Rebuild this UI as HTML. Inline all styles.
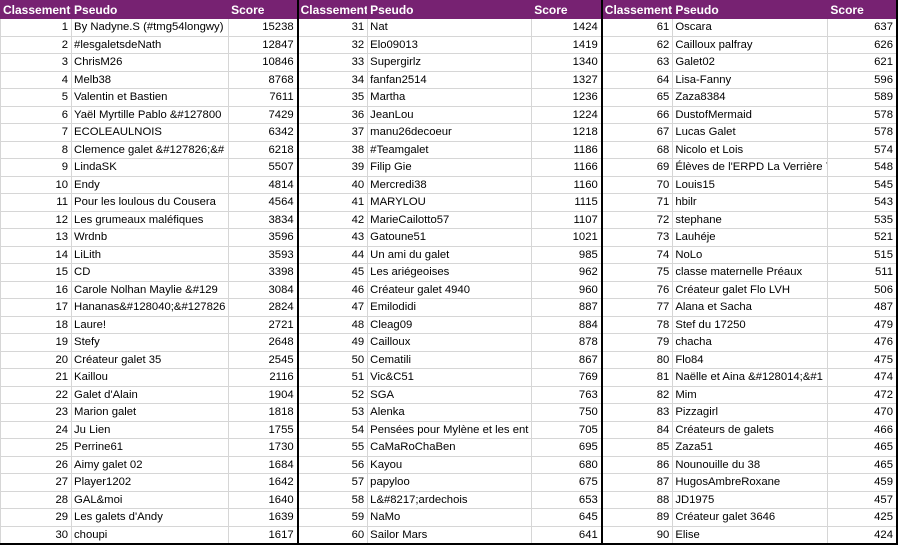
<!DOCTYPE html>
<html><head><meta charset="utf-8"><style>
body{margin:0;background:#fff;width:900px;height:547px;overflow:hidden}
table{border-collapse:collapse;table-layout:fixed;width:898px;font-family:"Liberation Sans",Arial,sans-serif;font-size:11.3px;color:#000}
td,th{height:16.5px;padding:0 3px 0 2px;white-space:nowrap;overflow:hidden;border:1px solid #d6d6d6;line-height:16px}
th{background:#772272;color:#fff;font-weight:bold;text-align:left;height:17px;font-size:12px;border-color:#772272;padding-left:2px}
tr>*:nth-child(1),tr>*:nth-child(4),tr>*:nth-child(7){text-align:right}
th:nth-child(1),th:nth-child(4),th:nth-child(7){text-align:left}
tr>*:nth-child(3),tr>*:nth-child(6),tr>*:nth-child(9){text-align:right}
th:nth-child(3),th:nth-child(6),th:nth-child(9){text-align:left}
tr>*:nth-child(2),tr>*:nth-child(5),tr>*:nth-child(8){border-left:1px solid #000;text-align:left}
tr>*:nth-child(4),tr>*:nth-child(7){border-left:2px solid #000}
tr>*:nth-child(9){border-right:2px solid #000}
tr:last-child td{border-bottom:2px solid #000}
</style></head><body>
<table>
<colgroup><col style="width:71px"><col style="width:157px"><col style="width:69px"><col style="width:70px"><col style="width:164px"><col style="width:70px"><col style="width:71px"><col style="width:155px"><col style="width:69px"></colgroup>
<tr><th>Classement</th><th>Pseudo</th><th>Score</th><th>Classement</th><th>Pseudo</th><th>Score</th><th>Classement</th><th>Pseudo</th><th>Score</th></tr>
<tr><td>1</td><td>By Nadyne.S (#tmg54longwy)</td><td>15238</td><td>31</td><td>Nat</td><td>1424</td><td>61</td><td>Oscara</td><td>637</td></tr>
<tr><td>2</td><td>#lesgaletsdeNath</td><td>12847</td><td>32</td><td>Elo09013</td><td>1419</td><td>62</td><td>Cailloux palfray</td><td>626</td></tr>
<tr><td>3</td><td>ChrisM26</td><td>10846</td><td>33</td><td>Supergirlz</td><td>1340</td><td>63</td><td>Galet02</td><td>621</td></tr>
<tr><td>4</td><td>Melb38</td><td>8768</td><td>34</td><td>fanfan2514</td><td>1327</td><td>64</td><td>Lisa-Fanny</td><td>596</td></tr>
<tr><td>5</td><td>Valentin et Bastien</td><td>7611</td><td>35</td><td>Martha</td><td>1236</td><td>65</td><td>Zaza8384</td><td>589</td></tr>
<tr><td>6</td><td>Yaël Myrtille Pablo &amp;#127800</td><td>7429</td><td>36</td><td>JeanLou</td><td>1224</td><td>66</td><td>DustofMermaid</td><td>578</td></tr>
<tr><td>7</td><td>ECOLEAULNOIS</td><td>6342</td><td>37</td><td>manu26decoeur</td><td>1218</td><td>67</td><td>Lucas Galet</td><td>578</td></tr>
<tr><td>8</td><td>Clemence galet &amp;#127826;&amp;#</td><td>6218</td><td>38</td><td>#Teamgalet</td><td>1186</td><td>68</td><td>Nicolo et Lois</td><td>574</td></tr>
<tr><td>9</td><td>LindaSK</td><td>5507</td><td>39</td><td>Filip Gie</td><td>1166</td><td>69</td><td>Élèves de l'ERPD La Verrière 7</td><td>548</td></tr>
<tr><td>10</td><td>Endy</td><td>4814</td><td>40</td><td>Mercredi38</td><td>1160</td><td>70</td><td>Louis15</td><td>545</td></tr>
<tr><td>11</td><td>Pour les loulous du Cousera</td><td>4564</td><td>41</td><td>MARYLOU</td><td>1115</td><td>71</td><td>hbilr</td><td>543</td></tr>
<tr><td>12</td><td>Les grumeaux maléfiques</td><td>3834</td><td>42</td><td>MarieCailotto57</td><td>1107</td><td>72</td><td>stephane</td><td>535</td></tr>
<tr><td>13</td><td>Wrdnb</td><td>3596</td><td>43</td><td>Gatoune51</td><td>1021</td><td>73</td><td>Lauhéje</td><td>521</td></tr>
<tr><td>14</td><td>LiLith</td><td>3593</td><td>44</td><td>Un ami du galet</td><td>985</td><td>74</td><td>NoLo</td><td>515</td></tr>
<tr><td>15</td><td>CD</td><td>3398</td><td>45</td><td>Les ariégeoises</td><td>962</td><td>75</td><td>classe maternelle Préaux</td><td>511</td></tr>
<tr><td>16</td><td>Carole Nolhan Maylie &amp;#129</td><td>3084</td><td>46</td><td>Créateur galet 4940</td><td>960</td><td>76</td><td>Créateur galet Flo LVH</td><td>506</td></tr>
<tr><td>17</td><td>Hananas&amp;#128040;&amp;#127826</td><td>2824</td><td>47</td><td>Emilodidi</td><td>887</td><td>77</td><td>Alana et Sacha</td><td>487</td></tr>
<tr><td>18</td><td>Laure!</td><td>2721</td><td>48</td><td>Cleag09</td><td>884</td><td>78</td><td>Stef du 17250</td><td>479</td></tr>
<tr><td>19</td><td>Stefy</td><td>2648</td><td>49</td><td>Cailloux</td><td>878</td><td>79</td><td>chacha</td><td>476</td></tr>
<tr><td>20</td><td>Créateur galet 35</td><td>2545</td><td>50</td><td>Cematili</td><td>867</td><td>80</td><td>Flo84</td><td>475</td></tr>
<tr><td>21</td><td>Kaillou</td><td>2116</td><td>51</td><td>Vic&amp;C51</td><td>769</td><td>81</td><td>Naëlle et Aina &amp;#128014;&amp;#1</td><td>474</td></tr>
<tr><td>22</td><td>Galet d'Alain</td><td>1904</td><td>52</td><td>SGA</td><td>763</td><td>82</td><td>Mim</td><td>472</td></tr>
<tr><td>23</td><td>Marion galet</td><td>1818</td><td>53</td><td>Alenka</td><td>750</td><td>83</td><td>Pizzagirl</td><td>470</td></tr>
<tr><td>24</td><td>Ju Lien</td><td>1755</td><td>54</td><td>Pensées pour Mylène et les ent</td><td>705</td><td>84</td><td>Créateurs de galets</td><td>466</td></tr>
<tr><td>25</td><td>Perrine61</td><td>1730</td><td>55</td><td>CaMaRoChaBen</td><td>695</td><td>85</td><td>Zaza51</td><td>465</td></tr>
<tr><td>26</td><td>Aimy galet 02</td><td>1684</td><td>56</td><td>Kayou</td><td>680</td><td>86</td><td>Nounouille du 38</td><td>465</td></tr>
<tr><td>27</td><td>Player1202</td><td>1642</td><td>57</td><td>papyloo</td><td>675</td><td>87</td><td>HugosAmbreRoxane</td><td>459</td></tr>
<tr><td>28</td><td>GAL&amp;moi</td><td>1640</td><td>58</td><td>L&amp;#8217;ardechois</td><td>653</td><td>88</td><td>JD1975</td><td>457</td></tr>
<tr><td>29</td><td>Les galets d'Andy</td><td>1639</td><td>59</td><td>NaMo</td><td>645</td><td>89</td><td>Créateur galet 3646</td><td>425</td></tr>
<tr><td>30</td><td>choupi</td><td>1617</td><td>60</td><td>Sailor Mars</td><td>641</td><td>90</td><td>Elise</td><td>424</td></tr>
</table>
</body></html>
